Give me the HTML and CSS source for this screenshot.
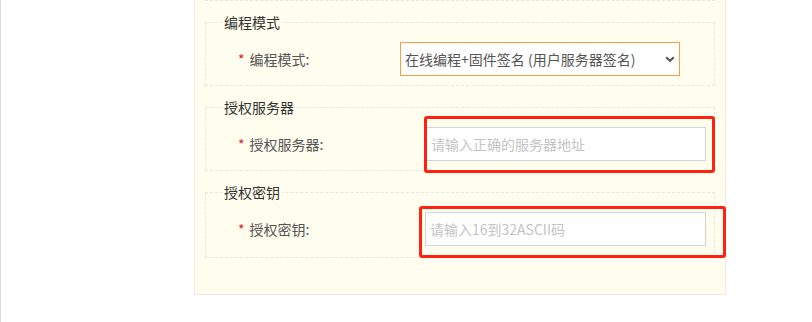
FILE: index.html
```html
<!DOCTYPE html>
<html lang="zh-CN">
<head>
<meta charset="utf-8">
<title>编程模式</title>
<link rel="stylesheet" href="styles.css">
</head>
<body>
<div class="page">
  <div class="panel">
    <div class="fs-tail"></div>

    <fieldset class="fs">
      <legend class="fs-legend">编程模式</legend>
      <div class="row">
        <label class="label label-select"><span class="req">*</span>编程模式:</label>
        <div class="control control-select">
          <select class="select">
            <option>在线编程+固件签名 (用户服务器签名)</option>
          </select>
          <svg class="chev" width="10" height="8" viewBox="0 0 10 8" aria-hidden="true"><path d="M1.2 2.2 L5 5.8 L8.8 2.2" fill="none" stroke="#555" stroke-width="2"/></svg>
        </div>
      </div>
    </fieldset>

    <fieldset class="fs">
      <legend class="fs-legend">授权服务器</legend>
      <div class="row">
        <label class="label label-server"><span class="req">*</span>授权服务器:</label>
        <div class="control">
          <input class="input" type="text" placeholder="请输入正确的服务器地址">
          <div class="mark mark-server"></div>
        </div>
      </div>
    </fieldset>

    <fieldset class="fs fs-last">
      <legend class="fs-legend">授权密钥</legend>
      <div class="row">
        <label class="label label-key"><span class="req">*</span>授权密钥:</label>
        <div class="control">
          <input class="input input-key" type="text" placeholder="请输入16到32ASCII码">
          <div class="mark mark-key"></div>
        </div>
      </div>
    </fieldset>
  </div>
</div>
</body>
</html>
```

FILE: styles.css
```css
* { box-sizing: border-box; }

html, body {
  margin: 0;
  padding: 0;
  background: #ffffff;
}

body {
  font-family: "Noto Sans CJK SC", "Noto Sans", "Liberation Sans", sans-serif;
  font-size: 14px;
  color: #555;
}

.page {
  height: 322px;
  border-left: 1px solid #dcdcdc;
  overflow: hidden;
}

.panel {
  margin-left: 193px;
  width: 532px;
  background: #fffdee;
  border: 1px solid #fbe3e3;
  border-top: none;
  padding: 0 10px 36px;
}

.fs-tail {
  height: 1px;
  border: 1px dashed #e6e6e2;
  border-top: none;
  margin-bottom: 11px;
}

.fs {
  margin: 0 0 11px;
  padding: 10px 16px 9px;
  border: 1px dashed #e6e6e2;
  min-width: 0;
}

.fs-last {
  margin-bottom: 0;
  padding-bottom: 11px;
}

.fs-legend {
  padding: 0 2px;
  line-height: 20px;
  font-size: 14px;
  color: #333;
}

.row {
  display: flex;
  align-items: center;
  padding-left: 16px;
  height: 34px;
}

.label {
  flex: none;
  color: #555;
  line-height: 20px;
}

.label-select { width: 162px; }
.label-server { width: 188px; }
.label-key { width: 187px; }

.req {
  color: #e02020;
  margin-right: 5px;
}

.control {
  position: relative;
  flex: none;
}

.select {
  appearance: none;
  -webkit-appearance: none;
  width: 280px;
  height: 34px;
  border: 1px solid #f5a044;
  border-radius: 0;
  background: #fff;
  padding: 0 22px 0 4px;
  font-family: inherit;
  font-size: 14px;
  color: #555;
  outline: none;
}

.chev {
  position: absolute;
  right: 5px;
  top: 13px;
  pointer-events: none;
}

.input {
  display: block;
  width: 280px;
  height: 34px;
  border: 1px solid #d4d4d4;
  background: #fff;
  padding: 0 4px;
  font-family: inherit;
  font-size: 14px;
  color: #555;
  outline: none;
}

.input::placeholder { color: #c4c4c4; }

.input-key { width: 281px; }

.mark {
  position: absolute;
  border: 3px solid #ff2211;
  border-radius: 3px;
  pointer-events: none;
}

.mark-server {
  left: -2px;
  top: -11px;
  right: -9px;
  bottom: -12px;
}

.mark-key {
  left: -6px;
  top: -6px;
  right: -20px;
  bottom: -12px;
}
```
